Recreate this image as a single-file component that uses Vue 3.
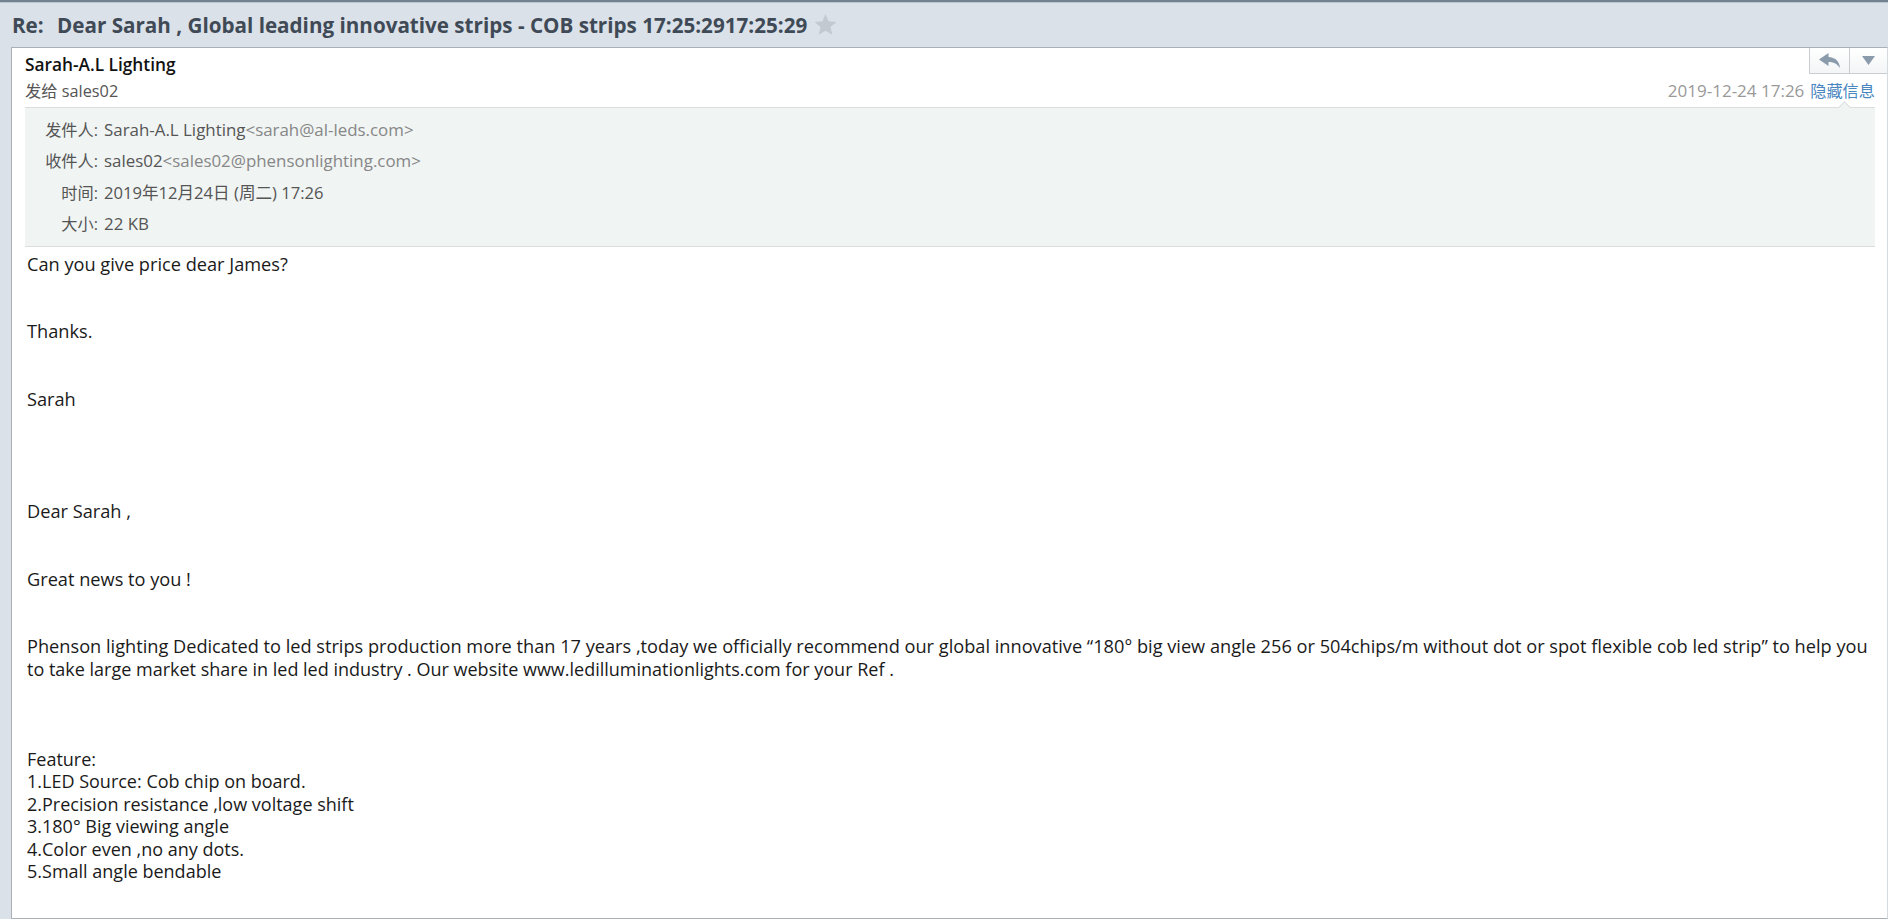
<script setup>
const rows = [
  { label: '发件人:', value: 'Sarah-A.L Lighting', mail: '<sarah@al-leds.com>' },
  { label: '收件人:', value: 'sales02', mail: '<sales02@phensonlighting.com>' },
  { label: '时间:', value: '2019年12月24日 (周二) 17:26', mail: '', tight: true },
  { label: '大小:', value: '22 KB', mail: '' }
]
const features = [
  'Feature:',
  '1.LED Source: Cob chip on board.',
  '2.Precision resistance ,low voltage shift',
  '3.180° Big viewing angle',
  '4.Color even ,no any dots.',
  '5.Small angle bendable'
]
</script>

<template>
  <div class="page">
    <header class="titlebar">
      <h1 class="subject"><span class="re">Re:</span> Dear Sarah , Global leading innovative strips - COB strips 17:25:2917:25:29</h1>
      <svg class="star" viewBox="0 0 24 24" width="23" height="23"><path d="M12 1l3.200 7.600 8.200.7-6.200 5.400 1.900 8L12 18.400l-7.100 4.300 1.900-8L.6 9.300l8.200-.7z" fill="#c3c9d1"/></svg>
    </header>
    <main class="card">
      <div class="actions">
        <button class="act act-reply">
          <svg viewBox="0 0 22 15" width="22" height="15"><path d="M9.500 0L0 6.500 9.500 13V9c4.500 0 8.500 1.500 11.500 6-.5-7-5-10.500-11.500-11z" fill="#8a9bab"/></svg>
        </button>
        <button class="act act-more">
          <svg viewBox="0 0 13 9" width="13" height="9"><path d="M0 0h13L6.500 9z" fill="#8a9bab"/></svg>
        </button>
      </div>
      <div class="head">
        <div class="sender">Sarah-A.L Lighting</div>
        <div class="toline">
          <span class="to">发给 sales02</span>
          <span class="meta"><span class="date">2019-12-24 17:26</span> <a class="toggle">隐藏信息</a></span>
        </div>
      </div>
      <section class="details">
        <span class="caret"></span>
        <div v-for="r in rows" :key="r.label" class="row">
          <span class="label">{{ r.label }}</span>
          <span class="value" :class="{ tight: r.tight }">{{ r.value }}</span><span class="mail">{{ r.mail }}</span>
        </div>
      </section>
      <article class="body">
        <p class="gap2">Can you give price dear James?</p>
        <p class="gap2">Thanks.</p>
        <p class="gap4">Sarah</p>
        <p class="gap2">Dear Sarah ,</p>
        <p class="gap2">Great news to you !</p>
        <p class="gap3">Phenson lighting Dedicated to led strips production more than 17 years ,today we officially recommend our global innovative “180° big view angle 256 or 504chips/m without dot or spot flexible cob led strip” to help you <span class="tail">to take large market share in led led industry . Our website www.ledilluminationlights.com for your Ref .</span></p>
        <p v-for="f in features" :key="f" class="feature">{{ f }}</p>
      </article>
    </main>
  </div>
</template>

<style scoped>
.page {
  height: 919px;
  overflow: hidden;
  box-sizing: border-box;
  background: #dae1e8;
  border-top: 2px solid #71818f;
  font-family: "Open Sans", "Noto Sans CJK SC", sans-serif;
  display: flex;
  flex-direction: column;
}
.titlebar {
  height: 45px;
  flex: none;
  box-sizing: border-box;
  padding: 1px 0 2px 12px;
  border-top: 1px solid #bcc6cf;
  display: flex;
  align-items: center;
  gap: 7px;
}
.subject {
  margin: 0;
  font-size: 20.640px;
  font-weight: 700;
  color: #3f4a56;
}
.re { margin-right: 8px; }
.star { flex: none; }
.card {
  flex: 1;
  margin-left: 11px;
  background: #fff;
  border: 1px solid #a9b0b6;
  border-right: 1px solid #d5dade;
  position: relative;
}
.actions {
  position: absolute;
  top: 0;
  right: 0;
  display: flex;
}
.act {
  width: 41px;
  height: 26px;
  padding: 0;
  background: linear-gradient(#fff, #f3f5f6);
  border: 1px solid #c8cdd1;
  border-top: 0;
  display: flex;
  align-items: center;
  justify-content: center;
}
.act-more { width: 37px; border-left: 0; border-right: 0; }
.head { padding: 4px 12px 0 13px; }
.sender {
  font-size: 17.300px;
  font-weight: 600;
  color: #111;
  line-height: 26px;
}
.toline {
  display: flex;
  justify-content: space-between;
  line-height: 26px;
  font-size: 16.300px;
  color: #555;
}
.meta { font-size: 17px; color: #999; }
.toggle { color: #4a86c0; font-size: 16.200px; margin-left: 1.500px; }
.details {
  margin: 2.600px 12px 0 13px;
  background: #f0f4f3;
  border-top: 1px solid #d9dddc;
  border-bottom: 1px solid #d9dddc;
  padding: 6.500px 0 6.500px;
  position: relative;
}
.caret {
  position: absolute;
  top: -5px;
  right: 26px;
  width: 8px;
  height: 8px;
  background: #f0f4f3;
  border-top: 1px solid #d9dddc;
  border-left: 1px solid #d9dddc;
  transform: rotate(45deg);
}
.row {
  line-height: 31.300px;
  height: 31.300px;
  font-size: 16.900px;
  color: #555;
  white-space: nowrap;
}
.label {
  display: inline-block;
  width: 73px;
  font-size: 16.200px;
  text-align: right;
  margin-right: 6px;
}
.tight { font-size: 16.600px; }
.mail { color: #878787; }
.body {
  padding: 5.900px 2px 0 15px;
  font-size: 18.200px;
  line-height: 22.500px;
  color: #1a1a1a;
}
.body p { margin: 0; }
.tail { font-size: 18px; }
.body .feature { font-size: 18px; }
.body .gap2 { margin-bottom: 45px; }
.body .gap3 { margin-bottom: 67.500px; }
.body .gap4 { margin-bottom: 90px; }
</style>
